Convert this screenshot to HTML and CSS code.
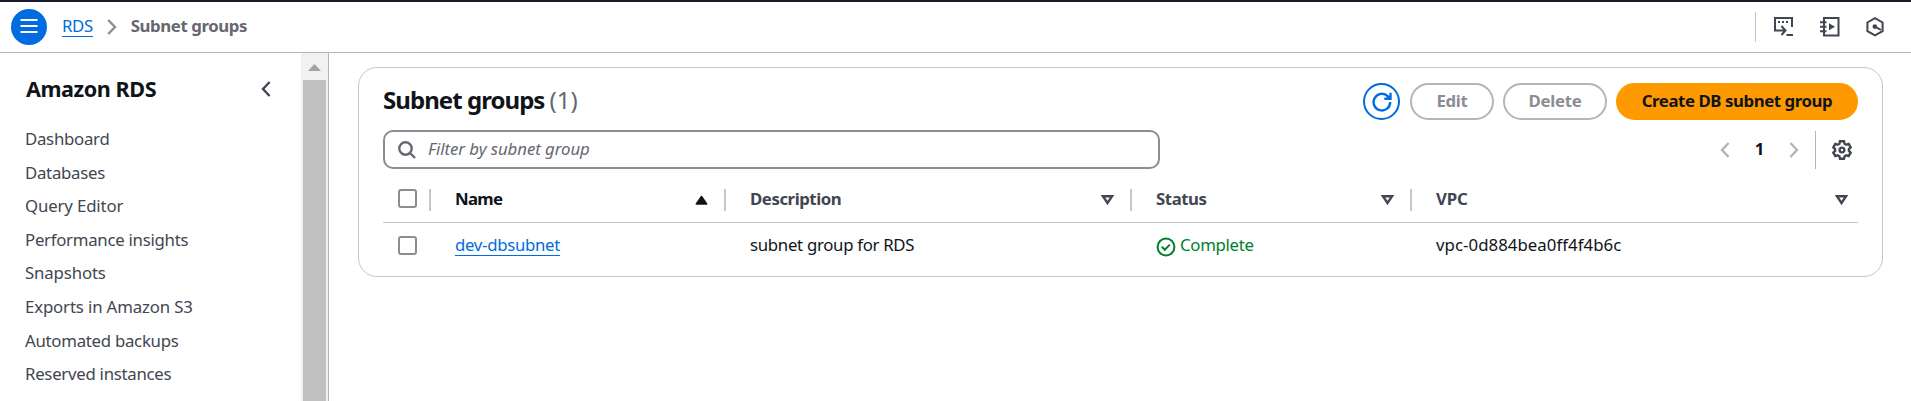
FILE: index.html
```html
<!DOCTYPE html>
<html lang="en">
<head>
<meta charset="utf-8">
<title>Subnet groups</title>
<link rel="stylesheet" href="styles.css">
</head>
<body>
<header class="topbar">
  <button class="menu" aria-label="Menu"><svg width="18" height="18" viewBox="0 0 18 18"><path d="M0.5 2h17M0.5 8h17M0.5 14h17"/></svg></button>
  <nav class="crumbs">
    <a class="crumb-link" href="#">RDS</a>
    <svg class="crumb-sep" width="10" height="16" viewBox="0 0 10 16"><path d="M1.2 1l6.8 7-6.8 7"/></svg>
    <span class="crumb-current">Subnet groups</span>
  </nav>
  <div class="tools">
    <svg width="20" height="20" viewBox="0 0 20 20"><path d="M5.500 13.500H1V1h17v9M5 13.500h6M7.500 9l4 4.500-4 4.500M12.500 18H19"/><path d="M4 5h2M8 5h2M12 5h2"/></svg>
    <svg width="20" height="20" viewBox="0 0 20 20"><path d="M4 1h14.500v17.500H4zM0 5.200h6.500M0 9.700h6.500M0 14.200h6.500"/><path class="solid" d="M9 6.200l6 3.500-6 3.500z"/></svg>
    <svg class="hex" width="20" height="20" viewBox="0 0 20 20"><path d="M10 1.200l7.600 4.300v8.600L10 18.400l-7.600-4.300V5.500z"/><circle class="solid" cx="9.800" cy="9.600" r="2.300"/><path d="M10 9.600l6 3.400"/></svg>
  </div>
</header>
<div class="layout">
  <aside class="side">
    <div class="side-main">
      <div class="side-head"><h2 class="side-title">Amazon RDS</h2>
        <svg width="10" height="16" viewBox="0 0 10 16"><path d="M8.600 1L2 8l6.600 7"/></svg></div>
      <ul class="side-list">
        <li class="tight">Dashboard</li>
        <li class="tight">Databases</li>
        <li>Query Editor</li>
        <li class="tight">Performance insights</li>
        <li>Snapshots</li>
        <li>Exports in Amazon S3</li>
        <li class="tight">Automated backups</li>
        <li class="tight">Reserved instances</li>
      </ul>
    </div>
    <div class="scroll"><svg width="23" height="27" viewBox="0 0 23 27"><path d="M5 18l6.500-7 6.500 7z"/></svg><div class="thumb"></div></div>
  </aside>
  <main class="content">
    <section class="card">
      <div class="card-head">
        <h1 class="title"><span class="title-name">Subnet groups</span><span class="count">(1)</span></h1>
        <div class="actions">
          <button class="refresh" aria-label="Refresh"><svg width="20" height="20" viewBox="0 0 20 20"><path d="M18.200 10A8.300 8.300 0 1 1 15.700 4.200L18 6.500M18.500 0.800v6h-6.200"/></svg></button>
          <button class="btn edit">Edit</button>
          <button class="btn delete">Delete</button>
          <button class="btn create">Create DB subnet group</button>
        </div>
      </div>
      <div class="filters">
        <div class="search"><svg width="18" height="18" viewBox="0 0 18 18"><circle cx="7.500" cy="7.500" r="6.200"/><path d="M12 12l5 5"/></svg><span class="placeholder">Filter by subnet group</span></div>
        <div class="pager">
          <svg class="chev" width="10" height="16" viewBox="0 0 10 16"><path d="M8.600 1L2 8l6.600 7"/></svg>
          <b class="page">1</b>
          <svg class="chev" width="10" height="16" viewBox="0 0 10 16"><path d="M1.400 1L8 8l-6.600 7"/></svg>
          <span class="rule"></span>
          <svg class="gear" width="20" height="20" viewBox="0 0 20 20"><path d="M8 1.200h4l.6 2.500 1.700 1 2.400-.8 2 3.400-1.800 1.800v1.800l1.800 1.800-2 3.400-2.400-.8-1.700 1-.6 2.500H8l-.6-2.500-1.700-1-2.400.8-2-3.400 1.800-1.800V9.100L1.300 7.300l2-3.400 2.400.8 1.700-1z"/><circle cx="10" cy="10" r="2.400"/></svg>
        </div>
      </div>
      <div class="table">
        <div class="row head">
          <div class="cell pick"><i class="box"></i></div>
          <div class="cell sorted"><span class="th-name">Name</span><svg width="13" height="10" viewBox="0 0 13 10"><path d="M1.300 9L6.500 1.500 11.700 9z"/></svg></div>
          <div class="cell"><span>Description</span><svg width="13" height="10" viewBox="0 0 13 10"><path d="M2 1.300h9L6.500 8z"/></svg></div>
          <div class="cell"><span>Status</span><svg width="13" height="10" viewBox="0 0 13 10"><path d="M2 1.300h9L6.500 8z"/></svg></div>
          <div class="cell last"><span>VPC</span><svg width="13" height="10" viewBox="0 0 13 10"><path d="M2 1.300h9L6.500 8z"/></svg></div>
        </div>
        <div class="row body">
          <div class="cell pick"><i class="box"></i></div>
          <div class="cell"><a class="link" href="#">dev-dbsubnet</a></div>
          <div class="cell"><span>subnet group for RDS</span></div>
          <div class="cell status"><svg width="20" height="20" viewBox="0 0 20 20"><circle cx="10" cy="10" r="8.400"/><path d="M5.800 9.800l3 3 5-5.200"/></svg><span>Complete</span></div>
          <div class="cell"><span class="vpc">vpc-0d884bea0ff4f4b6c</span></div>
        </div>
      </div>
    </section>
  </main>
</div>
</body>
</html>
```
FILE: styles.css
```css
* { box-sizing: border-box; }
body {
  margin: 0;
  height: 401px;
  overflow: hidden;
  display: flex;
  flex-direction: column;
  background: #fff;
  color: #0f141a;
  font: 16.8px/24px "Noto Sans", "Open Sans", sans-serif;
}
h1, h2, ul { margin: 0; padding: 0; }
svg { display: block; flex: none; fill: none; stroke: #424650; stroke-width: 2.4; }
button { margin: 0; padding: 0; font: inherit; background: #fff; }
a { color: #006ce0; text-decoration: none; }

.topbar {
  height: 53px;
  flex: none;
  display: flex;
  align-items: center;
  padding: 0 26px 0 11px;
  border-top: 2px solid #1b1c2a;
  border-bottom: 1px solid #b4b4bb;
}
.menu {
  width: 36px;
  height: 36px;
  border: 0;
  border-radius: 50%;
  background: #006ce0;
  display: grid;
  place-items: center;
}
.menu svg { stroke: #fff; stroke-width: 2; }
.crumbs { display: flex; align-items: center; margin-left: 15px; }
.crumb-link {
  height: 22px;
  margin-bottom: 2px;
  line-height: 21px;
  letter-spacing: -0.4px;
  border-bottom: 1px solid #006ce0;
}
.crumb-sep { margin: 0 14px; stroke: #8c8c94; }
.crumb-current { margin-bottom: 2px; color: #656871; font-weight: 700; letter-spacing: -0.4px; }
.tools {
  display: flex;
  align-items: center;
  gap: 26px;
  height: 30px;
  margin-left: auto;
  padding-left: 18px;
  border-left: 1px solid #c6c6cd;
}
.tools svg { stroke-width: 2; }
.tools .hex { margin-left: -1px; }
.solid { fill: #424650; stroke: none; }

.layout { flex: 1; min-height: 0; display: flex; }
.side { width: 329px; flex: none; display: flex; border-right: 1px solid #b4b4bb; }
.side-main { flex: 1; padding: 22px 30px 0 25px; }
.side-head { display: flex; align-items: center; justify-content: space-between; height: 28px; padding-left: 1px; }
.side-title { font-size: 21.6px; font-weight: 700; letter-spacing: -0.45px; }
.side-list { list-style: none; padding-top: 19px; color: #424650; line-height: 33.6px; letter-spacing: -0.14px; }
.side-list .tight { letter-spacing: -0.27px; }
.scroll { width: 27px; padding: 0 2px; background: #f1f1f1; display: flex; flex-direction: column; }
.scroll svg { fill: #a3a3a3; stroke: none; }
.thumb { flex: 1; background: #c1c1c1; }

.content { flex: 1; padding: 14px 28px 0 29px; }
.card {
  height: 210px;
  padding: 15px 24px 0;
  border: 1px solid #c6c6cd;
  border-radius: 19px;
}
.card-head { height: 37px; display: flex; justify-content: space-between; align-items: center; }
.title { display: flex; gap: 5px; padding-bottom: 3px; font-size: 24px; line-height: 30px; }
.title-name { letter-spacing: -0.95px; }
.count { color: #656871; font-weight: 400; }
.actions { display: flex; }
.refresh {
  width: 37px;
  height: 37px;
  border: 2px solid #006ce0;
  border-radius: 50%;
  display: grid;
  place-items: center;
  margin-right: 10px;
}
.refresh svg { stroke: #006ce0; }
.btn {
  height: 37px;
  padding-bottom: 2px;
  border: 2px solid #b4b4bb;
  border-radius: 19px;
  color: #8c8c94;
  font-weight: 700;
  letter-spacing: -0.3px;
  white-space: nowrap;
}
.edit { width: 84px; margin-right: 9px; }
.delete { width: 104px; margin-right: 9px; }
.create { width: 242px; border-color: #ff9900; background: #ff9900; color: #0f141a; letter-spacing: -0.42px; }

.filters { display: flex; justify-content: space-between; margin-top: 10px; height: 39px; }
.search {
  width: 777px;
  display: flex;
  align-items: center;
  gap: 12px;
  padding-left: 13px;
  border: 2px solid #8c8c94;
  border-radius: 10px;
}
.search svg { stroke: #656871; }
.placeholder { padding-bottom: 2px; color: #656871; font-style: italic; letter-spacing: -0.05px; }
.pager { display: flex; align-items: center; padding-right: 6px; }
.chev { stroke: #b4b4bb; }
.page { width: 59px; padding-bottom: 2px; text-align: center; }
.rule { width: 1px; height: 38px; margin: 0 16px; background: #b4b4bb; }

.row { display: grid; grid-template-columns: 48px 295px 406px 280px 446px; }
.cell { display: flex; align-items: center; padding-left: 24px; }
.head {
  height: 54px;
  padding: 20px 0 11px;
  border-bottom: 1px solid #c6c6cd;
  color: #424650;
  font-weight: 700;
  letter-spacing: -0.45px;
}
.head .cell { justify-content: space-between; height: 22px; padding-right: 16px; padding-bottom: 3px; border-right: 2px solid #c6c6cd; }
.head svg { margin-top: 2px; }
.head .sorted { color: #0f141a; }
.th-name { letter-spacing: -0.7px; }
.sorted svg { fill: #0f141a; stroke: #0f141a; stroke-width: 1.5; stroke-linejoin: round; }
.head .last { border: 0; padding-right: 10px; letter-spacing: -0.15px; }
.cell.pick { padding-left: 15px; padding-right: 0; }
.box { flex: none; width: 19px; height: 19px; border: 2px solid #8c8c94; border-radius: 3px; }
.body { height: 45px; letter-spacing: -0.3px; }
.body span { padding-bottom: 2px; }
.link { height: 22px; margin-bottom: 1px; line-height: 21px; border-bottom: 1px solid #006ce0; }
.vpc { letter-spacing: 0.05px; }
.status { gap: 4px; color: #00802f; }
.status svg { margin-top: 2px; stroke: #00802f; stroke-width: 2; }
```
